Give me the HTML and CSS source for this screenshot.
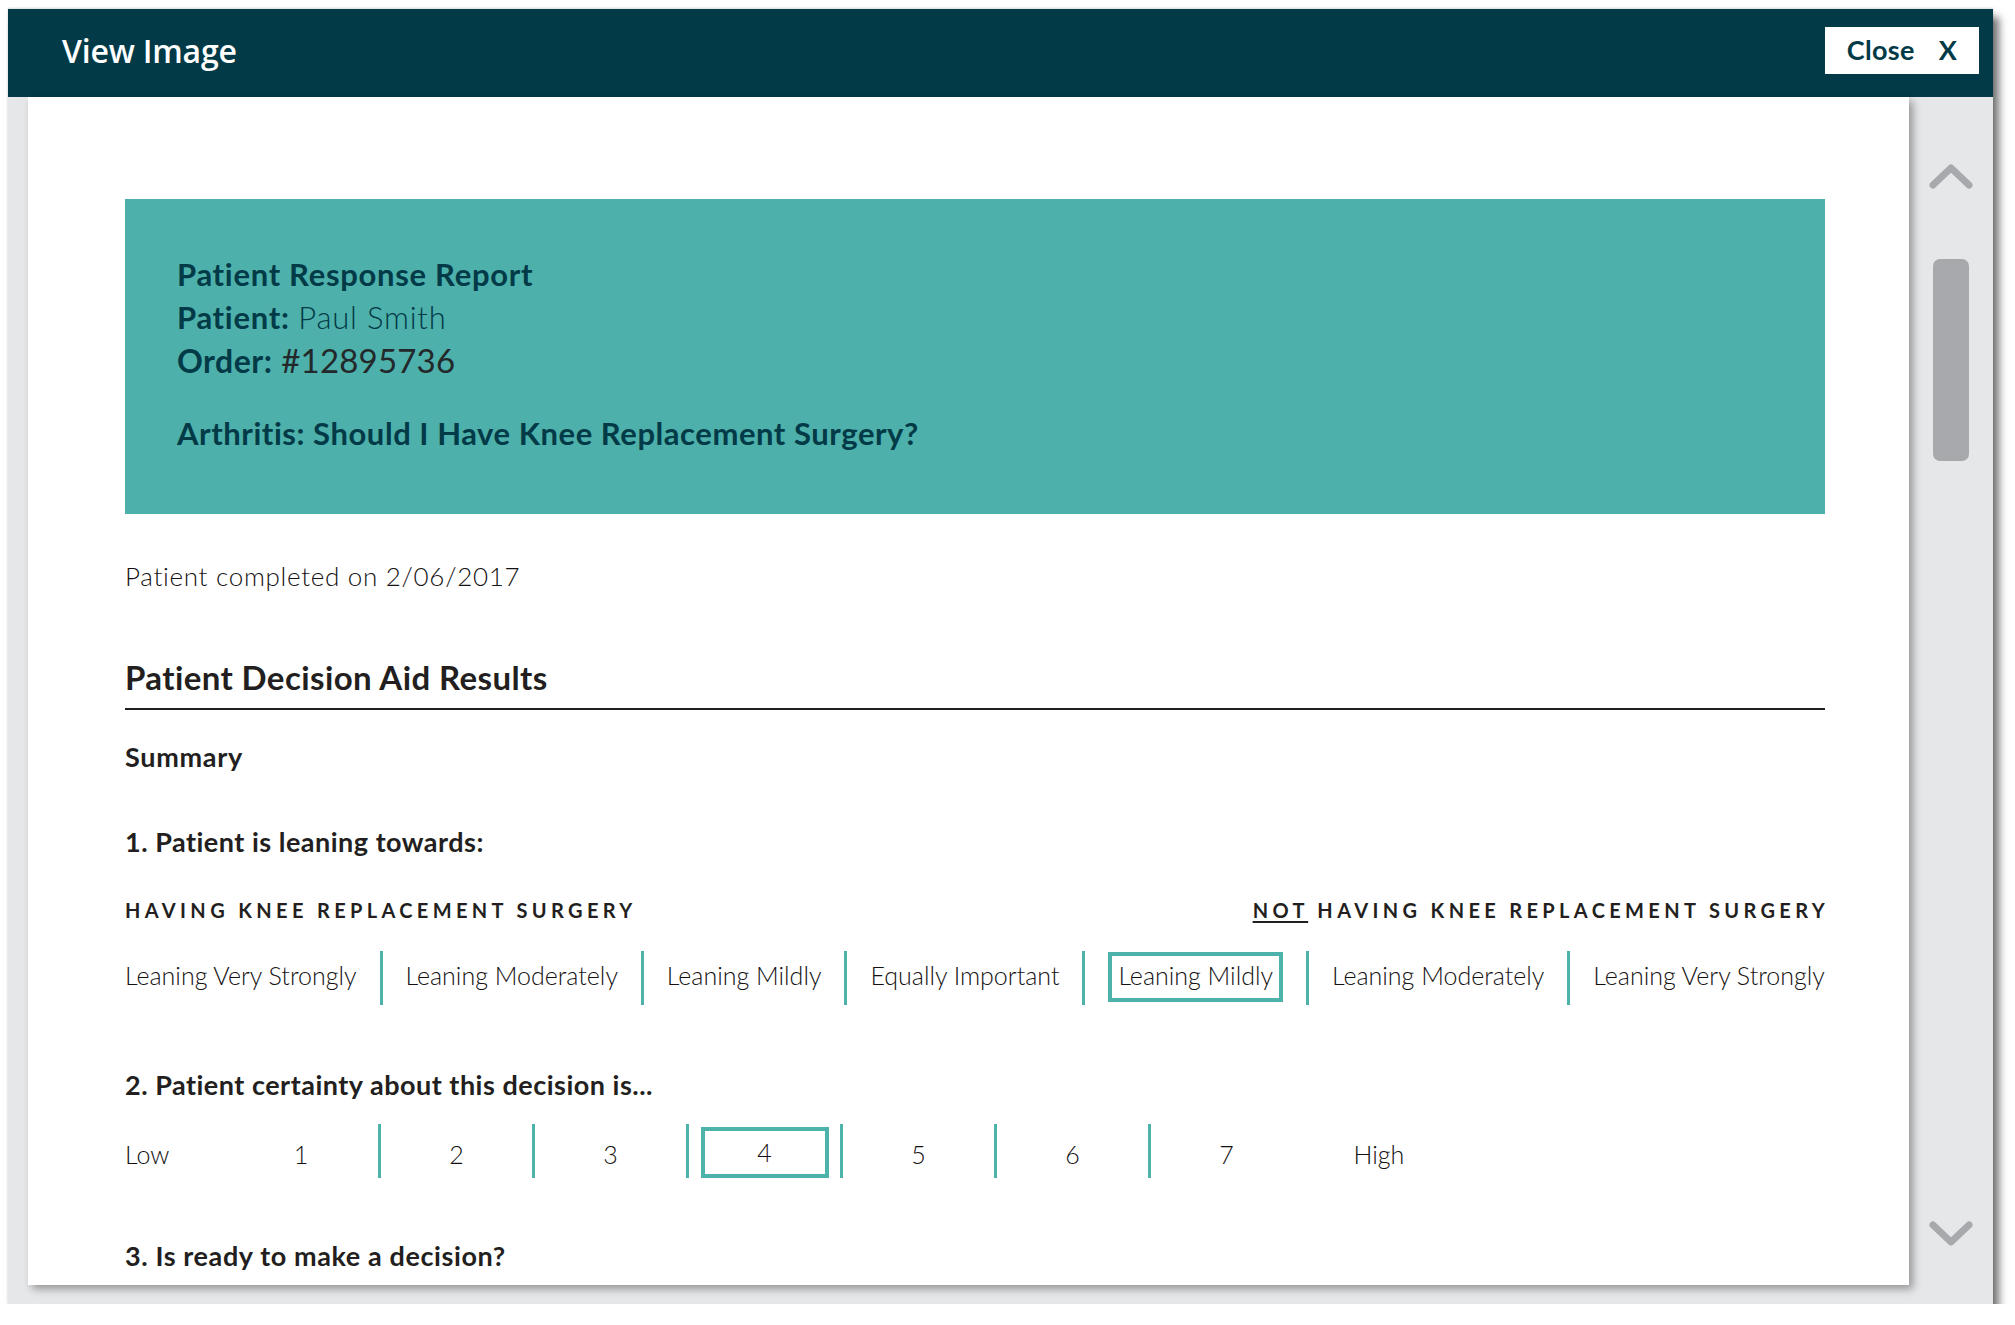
FILE: index.html
```html
<!DOCTYPE html>
<html lang="en">
<head>
<meta charset="utf-8">
<title>View Image</title>
<link rel="stylesheet" href="styles.css">
</head>
<body>
<div class="modal">
  <header class="modal-header">
    <h1 class="modal-title">View Image</h1>
    <button class="close-btn" type="button"><span>Close</span><span class="close-x">X</span></button>
  </header>
  <div class="modal-body">
    <div class="panel">
      <section class="report-banner">
        <p class="banner-title">Patient Response Report</p>
        <p class="banner-line"><strong>Patient:</strong> <span class="light">Paul Smith</span></p>
        <p class="banner-line order"><strong>Order:</strong> <span class="order-num">#12895736</span></p>
        <p class="banner-topic">Arthritis: Should I Have Knee Replacement Surgery?</p>
      </section>

      <p class="completed">Patient completed on 2/06/2017</p>

      <h2 class="section-title">Patient Decision Aid Results</h2>

      <h3 class="summary">Summary</h3>

      <h4 class="question q1">1. Patient is leaning towards:</h4>
      <div class="poles">
        <span class="pole">HAVING KNEE REPLACEMENT SURGERY</span>
        <span class="pole"><u>NOT</u> HAVING KNEE REPLACEMENT SURGERY</span>
      </div>
      <div class="lean-scale">
        <span class="lean-item">Leaning Very Strongly</span>
        <span class="divider"></span>
        <span class="lean-item">Leaning Moderately</span>
        <span class="divider"></span>
        <span class="lean-item">Leaning Mildly</span>
        <span class="divider"></span>
        <span class="lean-item">Equally Important</span>
        <span class="divider"></span>
        <span class="lean-item selected">Leaning Mildly</span>
        <span class="divider"></span>
        <span class="lean-item">Leaning Moderately</span>
        <span class="divider"></span>
        <span class="lean-item">Leaning Very Strongly</span>
      </div>

      <h4 class="question q2">2. Patient certainty about this decision is...</h4>
      <div class="certainty">
        <span class="cert-label low">Low</span>
        <span class="cert-cell">1</span>
        <span class="cert-cell sep">2</span>
        <span class="cert-cell sep">3</span>
        <span class="cert-cell sep"><span class="cert-box">4</span></span>
        <span class="cert-cell sep">5</span>
        <span class="cert-cell sep">6</span>
        <span class="cert-cell sep">7</span>
        <span class="cert-label high">High</span>
      </div>

      <h4 class="question q3">3. Is ready to make a decision?</h4>
    </div>
    <div class="scrollbar">
      <svg class="chev chev-up" width="44" height="26" viewBox="0 0 44 26"><path d="M4 22 L22 5 L40 22" fill="none" stroke="#a7a9ac" stroke-width="7" stroke-linecap="round" stroke-linejoin="round"/></svg>
      <div class="thumb"></div>
      <div class="track-space"></div>
      <svg class="chev chev-down" width="44" height="26" viewBox="0 0 44 26"><path d="M4 4 L22 21 L40 4" fill="none" stroke="#a7a9ac" stroke-width="7" stroke-linecap="round" stroke-linejoin="round"/></svg>
    </div>
  </div>
</div>
</body>
</html>
```
FILE: styles.css
```css
* { box-sizing: border-box; }
html, body { margin: 0; padding: 0; background: #ffffff; }
body { font-family: "Lato", "Open Sans", sans-serif; color: #231f20; }

.modal {
  margin: 9px 0 0 8px;
  width: 1985px;
  height: 1295px;
  display: flex;
  flex-direction: column;
  box-shadow: 0 -1px 2px rgba(0,0,0,0.15), 6px 8px 8px rgba(0,0,0,0.55);
}

.modal-header {
  height: 88px;
  flex: none;
  background: #023a47;
  display: flex;
  align-items: center;
  justify-content: space-between;
  padding: 0 14px 6px 54px;
}
.modal-title {
  margin: 0;
  font-family: "Open Sans", sans-serif;
  font-weight: 600;
  font-size: 32px;
  color: #ffffff;
  letter-spacing: -0.2px;
}
.close-btn {
  width: 154px;
  height: 47px;
  border: 0;
  background: #ffffff;
  color: #023a47;
  font-family: "Lato", sans-serif;
  font-weight: 700;
  font-size: 27px;
  letter-spacing: 0.3px;
  display: flex;
  align-items: center;
  justify-content: center;
  gap: 24px;
  padding: 0 0 2px 0;
}

.modal-body {
  flex: 1;
  display: flex;
  background: #e6e7e9;
  padding: 0 0 19px 20px;
  min-height: 0;
}

.panel {
  flex: 1;
  background: #ffffff;
  padding: 102px 84px 0 97px;
  overflow: hidden;
  box-shadow: 4px 4px 8px rgba(0,0,0,0.35);
  position: relative;
  z-index: 1;
}

.report-banner {
  background: #4db0aa;
  height: 315px;
  padding: 54px 52px 0;
  color: #023a47;
}
.report-banner p { margin: 0; font-size: 31px; line-height: 43px; letter-spacing: 0.7px; }
.banner-title, .banner-topic { font-weight: 700; }
.banner-line strong { font-weight: 700; }
.light { font-weight: 300; letter-spacing: 0.8px; }
.report-banner .order { font-size: 32px; letter-spacing: 0.5px; }
.order-num { font-weight: 400; color: #23282a; font-size: 33px; letter-spacing: 0.2px; }
.report-banner .banner-topic { margin-top: 30px; letter-spacing: 0.55px; }

.completed {
  margin: 47px 0 0;
  font-size: 26px;
  line-height: 30px;
  font-weight: 300;
  letter-spacing: 0.7px;
  color: #141112;
}

.section-title {
  margin: 66px 0 0;
  font-size: 33px;
  line-height: 40px;
  font-weight: 700;
  letter-spacing: 0.4px;
  padding-bottom: 11px;
  border-bottom: 2px solid #231f20;
}

.summary {
  margin: 32px 0 0;
  font-size: 27px;
  line-height: 30px;
  font-weight: 700;
  letter-spacing: 0.7px;
}

.question {
  margin: 55px 0 0;
  font-size: 27px;
  line-height: 30px;
  font-weight: 700;
  letter-spacing: 0.5px;
}
.q2 { margin-top: 65px; }
.q3 { margin-top: 63px; letter-spacing: 0.6px; }

.poles {
  margin-top: 41px;
  display: flex;
  justify-content: space-between;
  font-size: 20px;
  line-height: 24px;
  letter-spacing: 4.35px;
  font-weight: 700;
}
.poles .pole:last-child { margin-right: -4px; }
.pole u { text-underline-offset: 3px; }

.lean-scale {
  margin-top: 29px;
  display: flex;
  justify-content: space-between;
  align-items: center;
  height: 54px;
  font-size: 25px;
  font-weight: 300;
  color: #141112;
}
.lean-item { white-space: nowrap; padding-bottom: 7px; }
.lean-item.selected {
  border: 4px solid #4db3aa;
  padding: 5px 6px 9px;
  line-height: 28px;
  margin-bottom: 2px;
}
.divider {
  width: 3px;
  height: 54px;
  background: #4db3aa;
}

.certainty {
  margin-top: 24px;
  display: flex;
  height: 54px;
  font-size: 25px;
  font-weight: 300;
  color: #141112;
}
.cert-label { display: flex; align-items: center; padding-top: 6px; }
.low { width: 99px; }
.high { width: 154px; justify-content: center; }
.cert-cell {
  width: 154px;
  display: flex;
  align-items: center;
  justify-content: center;
  padding-top: 6px;
}
.cert-cell.sep { border-left: 3px solid #4db3aa; }
.cert-box {
  width: 128px;
  height: 51px;
  border: 4px solid #4db3aa;
  display: flex;
  align-items: center;
  justify-content: center;
  margin-top: -4px;
}

.scrollbar {
  width: 84px;
  flex: none;
  display: flex;
  flex-direction: column;
  align-items: center;
}
.chev { display: block; }
.chev-up { margin-top: 66px; }
.thumb {
  margin-top: 70px;
  width: 36px;
  height: 202px;
  border-radius: 7px;
  background: #a7a9ac;
}
.track-space { flex: 1; }
.chev-down { margin-bottom: 38px; }
```
